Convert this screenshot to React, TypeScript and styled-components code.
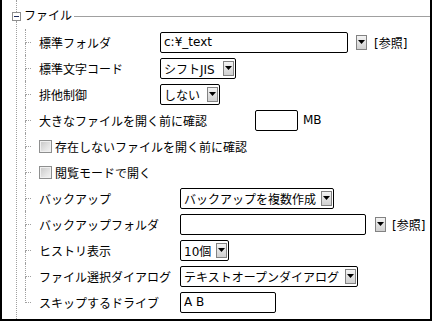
import * as React from 'react';
import styled, { createGlobalStyle } from 'styled-components';

const GlobalStyle = createGlobalStyle`
  html, body {
    margin: 0;
    padding: 0;
    background: #fff;
  }
  body {
    font-family: "DejaVu Sans", "Noto Sans CJK JP", sans-serif;
    font-size: 12px;
    color: #000;
  }
`;

const Panel = styled.div`
  box-sizing: border-box;
  width: 432px;
  height: 321px;
  border: 2px solid #000;
  border-top: none;
  padding-left: 10px;
  display: flex;
  overflow: hidden;
  background: #fff;
`;

const Gutter = styled.div`
  width: 9px;
  flex: none;
  display: flex;
  flex-direction: column;
  align-items: center;
`;

const GutterLine = styled.div<{ $height?: number }>`
  width: 0;
  border-left: 1px dotted #a0a0a0;
  height: ${(p) => (p.$height ? `${p.$height}px` : 'auto')};
  flex: ${(p) => (p.$height ? 'none' : '1')};
`;

const Expander = styled.div`
  box-sizing: border-box;
  width: 9px;
  height: 9px;
  border: 1px solid #8e8e8e;
  background: #fff;
  display: flex;
  align-items: center;
  justify-content: center;

  &::after {
    content: '';
    width: 5px;
    height: 1px;
    background: #1c2a5a;
  }
`;

const Content = styled.div`
  flex: 1;
  margin-left: 3px;
  display: flex;
  flex-direction: column;
`;

const Header = styled.div`
  height: 29px;
  display: flex;
  align-items: flex-start;
`;

const Title = styled.span`
  margin-top: 8px;
  line-height: 16px;
  white-space: nowrap;
`;

const Rule = styled.div`
  flex: 1;
  margin-top: 16px;
  margin-left: 2px;
  border-top: 1px solid #a0a0a0;
`;

const Items = styled.div`
  margin-left: 1px;
  display: flex;
  flex-direction: column;
`;

const Row = styled.div`
  height: 26px;
  display: flex;
  align-items: center;
`;

const Branch = styled.div`
  align-self: stretch;
  width: 6px;
  flex: none;
  margin-right: 8px;
  display: flex;
  flex-direction: column;
`;

const BranchTop = styled.div`
  box-sizing: border-box;
  height: 14px;
  border-left: 1px dotted #a0a0a0;
  border-bottom: 1px dotted #a0a0a0;
`;

const BranchBottom = styled.div<{ $last?: boolean }>`
  flex: 1;
  border-left: ${(p) => (p.$last ? 'none' : '1px dotted #a0a0a0')};
`;

const Label = styled.span<{ $width: number }>`
  width: ${(p) => p.$width}px;
  flex: none;
  white-space: nowrap;
`;

const Field = styled.div<{ $width: number }>`
  box-sizing: border-box;
  width: ${(p) => p.$width}px;
  height: 21px;
  flex: none;
  border: 1px solid #000;
  border-radius: 2px;
  padding: 0 1px 0 3px;
  display: flex;
  align-items: center;
  background: #fff;
  white-space: nowrap;
  overflow: hidden;
`;

const FieldText = styled.span`
  flex: 1;
  overflow: hidden;
`;

const ArrowButton = styled.div<{ $gap?: number }>`
  box-sizing: border-box;
  width: 11px;
  height: 15px;
  flex: none;
  margin-left: ${(p) => p.$gap ?? 0}px;
  border: 1px solid #828282;
  background: linear-gradient(to bottom, #f3f3f3, #d0d0d0);
  display: flex;
  align-items: center;
  justify-content: center;

  svg {
    display: block;
  }
`;

const Suffix = styled.span<{ $gap: number }>`
  margin-left: ${(p) => p.$gap}px;
  white-space: nowrap;
`;

const Checkbox = styled.div`
  box-sizing: border-box;
  width: 13px;
  height: 13px;
  flex: none;
  margin-right: 3px;
  border: 1px solid #8e8f8f;
  background: linear-gradient(135deg, #c6c6c6 0%, #e4e4e4 60%, #f4f4f4 100%);
  box-shadow: inset 0 0 0 1px #f0f0f0;
`;

const Arrow = ({ gap }: { gap?: number }) => (
  <ArrowButton $gap={gap}>
    <svg width="7" height="4" viewBox="0 0 7 4">
      <polygon points="0,0 7,0 3.5,4" fill="#000" />
    </svg>
  </ArrowButton>
);

const Select = ({ width, value }: { width: number; value: string }) => (
  <Field $width={width}>
    <FieldText>{value}</FieldText>
    <Arrow />
  </Field>
);

const Item = ({ last, children }: { last?: boolean; children: React.ReactNode }) => (
  <Row>
    <Branch>
      <BranchTop />
      <BranchBottom $last={last} />
    </Branch>
    {children}
  </Row>
);

export default function App() {
  return (
    <>
      <GlobalStyle />
      <Panel>
        <Gutter>
          <GutterLine $height={12} />
          <Expander />
          <GutterLine />
        </Gutter>
        <Content>
          <Header>
            <Title>ファイル</Title>
            <Rule />
          </Header>
          <Items>
            <Item>
              <Label $width={121}>標準フォルダ</Label>
              <Field $width={188}>
                <FieldText>c:¥_text</FieldText>
              </Field>
              <Arrow gap={8} />
              <Suffix $gap={7}>[参照]</Suffix>
            </Item>
            <Item>
              <Label $width={121}>標準文字コード</Label>
              <Select width={76} value="シフトJIS" />
            </Item>
            <Item>
              <Label $width={121}>排他制御</Label>
              <Select width={60} value="しない" />
            </Item>
            <Item>
              <Label $width={216}>大きなファイルを開く前に確認</Label>
              <Field $width={43} />
              <Suffix $gap={5}>MB</Suffix>
            </Item>
            <Item>
              <Checkbox />
              <Label $width={300}>存在しないファイルを開く前に確認</Label>
            </Item>
            <Item>
              <Checkbox />
              <Label $width={300}>閲覧モードで開く</Label>
            </Item>
            <Item>
              <Label $width={141}>バックアップ</Label>
              <Select width={154} value="バックアップを複数作成" />
            </Item>
            <Item>
              <Label $width={141}>バックアップフォルダ</Label>
              <Field $width={186} />
              <Arrow gap={9} />
              <Suffix $gap={6}>[参照]</Suffix>
            </Item>
            <Item>
              <Label $width={141}>ヒストリ表示</Label>
              <Select width={49} value="10個" />
            </Item>
            <Item>
              <Label $width={141}>ファイル選択ダイアログ</Label>
              <Select width={178} value="テキストオープンダイアログ" />
            </Item>
            <Item last>
              <Label $width={141}>スキップするドライブ</Label>
              <Field $width={96}>
                <FieldText>A B</FieldText>
              </Field>
            </Item>
          </Items>
        </Content>
      </Panel>
    </>
  );
}
